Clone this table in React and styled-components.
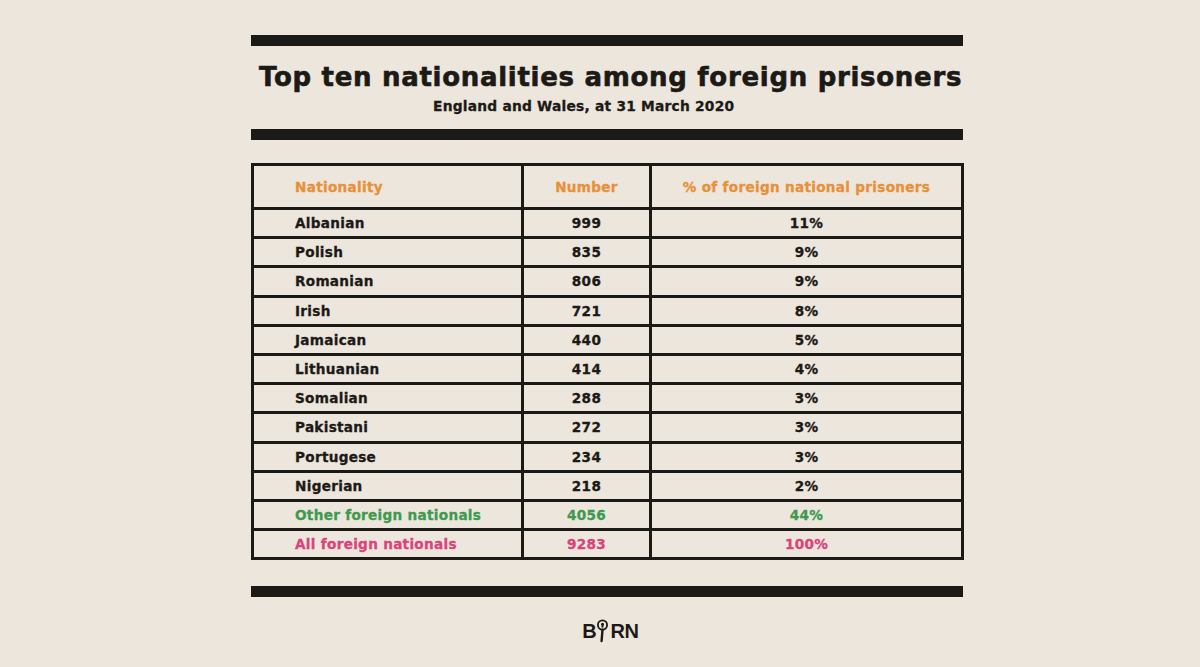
import React from "react";
import styled, { createGlobalStyle } from "styled-components";

const Global = createGlobalStyle`
  html, body { margin: 0; padding: 0; background: #ece6dc; }
  body { font-family: "DejaVu Sans", "Liberation Sans", sans-serif; color: #1c1a17; }
`;

const Page = styled.div`
  width: 1200px;
  height: 667px;
  background: #ece6dc;
  padding-top: 35px;
  box-sizing: border-box;
  overflow: hidden;
`;

const Column = styled.div`
  width: 713px;
  margin-left: 251px;
  display: flex;
  flex-direction: column;
`;

const Rule = styled.div`
  height: 11px;
  width: 712px;
  background: #1c1a17;
  margin-top: ${(p) => p.$mt || 0}px;
`;

const Title = styled.h1`
  margin: 17px 0 0 8px;
  font-family: "DejaVu Sans", sans-serif;
  font-weight: 700;
  font-size: 26px;
  line-height: 28px;
  letter-spacing: 0.7px;
  white-space: nowrap;
  color: #1c1a17;
  -webkit-text-stroke: 0.6px #1c1a17;
`;

const Subtitle = styled.div`
  margin: 7px 0 0 182px;
  font-weight: 700;
  font-size: 13.8px;
  line-height: 16px;
  letter-spacing: 0.22px;
  white-space: nowrap;
  -webkit-text-stroke: 0.3px #1c1a17;
`;

const Grid = styled.div`
  margin-top: 23px;
  display: grid;
  grid-template-columns: 267px 125px 309px;
  grid-template-rows: 41px;
  grid-auto-rows: 26.2px;
  gap: 3px;
  padding: 3px;
  background: #1c1a17;
  width: 707px;
`;

const colors = {
  head: "#e8903a",
  body: "#1c1a17",
  other: "#3e9a4f",
  all: "#d8457c",
};

const Cell = styled.div`
  background: #ece6dc;
  display: flex;
  align-items: center;
  justify-content: ${(p) => (p.$first ? "flex-start" : "center")};
  padding-left: ${(p) => (p.$first ? "41px" : "0")};
  font-weight: 700;
  font-size: 13.6px;
  letter-spacing: 0.3px;
  color: ${(p) => colors[p.$kind]};
  -webkit-text-stroke: 0.3px ${(p) => colors[p.$kind]};
  white-space: nowrap;
`;

const Footer = styled.div`
  margin-top: 20px;
  display: flex;
  justify-content: center;
  align-items: flex-end;
  padding-left: 6px;
`;

const LogoText = styled.span`
  font-family: "Liberation Sans", sans-serif;
  font-weight: 700;
  font-size: 20px;
  line-height: 20px;
  color: #1c1a17;
  letter-spacing: -0.3px;
`;

const Magnifier = () => (
  <svg width="13" height="24" viewBox="0 0 13 24" style={{ margin: "0 1px 0 0", position: "relative", top: "2px" }}>
    <circle cx="6.5" cy="6" r="4.6" fill="none" stroke="#1c1a17" strokeWidth="1.8" />
    <circle cx="6.5" cy="5.2" r="1.5" fill="#1c1a17" />
    <path d="M5.8 5.6 L7.2 5.6 L7.6 8.6 L5.4 8.6 Z" fill="#1c1a17" />
    <path d="M6.5 10.6 L5.6 22" stroke="#1c1a17" strokeWidth="2.4" strokeLinecap="round" />
  </svg>
);

const rows = [
  ["Albanian", "999", "11%", "body"],
  ["Polish", "835", "9%", "body"],
  ["Romanian", "806", "9%", "body"],
  ["Irish", "721", "8%", "body"],
  ["Jamaican", "440", "5%", "body"],
  ["Lithuanian", "414", "4%", "body"],
  ["Somalian", "288", "3%", "body"],
  ["Pakistani", "272", "3%", "body"],
  ["Portugese", "234", "3%", "body"],
  ["Nigerian", "218", "2%", "body"],
  ["Other foreign nationals", "4056", "44%", "other"],
  ["All foreign nationals", "9283", "100%", "all"],
];

export default function App() {
  return (
    <Page>
      <Global />
      <Column>
        <Rule />
        <Title>Top ten nationalities among foreign prisoners</Title>
        <Subtitle>England and Wales, at 31 March 2020</Subtitle>
        <Rule $mt={15} />
        <Grid>
          <Cell $first $kind="head">Nationality</Cell>
          <Cell $kind="head">Number</Cell>
          <Cell $kind="head">% of foreign national prisoners</Cell>
          {rows.map(([n, num, pct, kind]) => (
            <React.Fragment key={n}>
              <Cell $first $kind={kind}>{n}</Cell>
              <Cell $kind={kind}>{num}</Cell>
              <Cell $kind={kind}>{pct}</Cell>
            </React.Fragment>
          ))}
        </Grid>
        <Rule $mt={26} />
        <Footer>
          <LogoText>B</LogoText>
          <Magnifier />
          <LogoText>RN</LogoText>
        </Footer>
      </Column>
    </Page>
  );
}
